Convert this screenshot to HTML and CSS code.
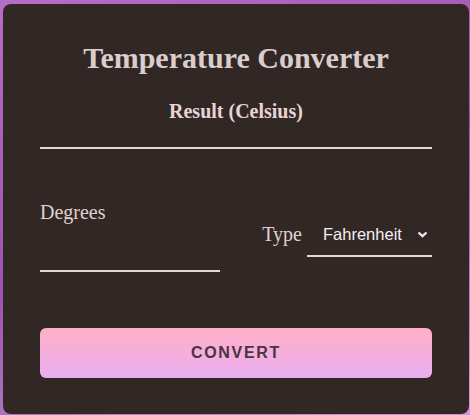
FILE: index.html
```html
<!DOCTYPE html>
<html>
<head>
<meta charset="utf-8">
<link rel="stylesheet" href="styles.css">
</head>
<body>
<div class="card">
  <h1 class="title">Temperature Converter</h1>
  <div class="result-label">Result (Celsius)</div>
  <div class="result-line"></div>
  <div class="row">
    <div class="degrees">
      <label class="label">Degrees</label>
      <div class="degrees-line"></div>
    </div>
    <div class="type">
      <span class="label">Type</span>
      <div class="select">
        <span class="select-text">Fahrenheit</span>
        <svg class="chev" width="11" height="7" viewBox="0 0 11 7"><path d="M1.5 1.5 L5.5 5.2 L9.5 1.5" fill="none" stroke="#f2e8ec" stroke-width="2.3"/></svg>
      </div>
    </div>
  </div>
  <button class="btn">CONVERT</button>
</div>
</body>
</html>
```
FILE: styles.css
```css
html, body { margin: 0; padding: 0; }
body {
  width: 470px;
  height: 415px;
  overflow: hidden;
  background: linear-gradient(160deg, #b36ec6 0%, #9a55b0 50%, #c89ad6 100%);
  font-family: "Liberation Serif", "Times New Roman", serif;
}
.card {
  margin: 4px 0 0 3px;
  width: 466px;
  height: 410px;
  box-sizing: border-box;
  background: #312826;
  border-radius: 8px;
  padding: 36px 37px 0;
  display: flex;
  flex-direction: column;
}
.title {
  margin: 0;
  font-size: 30px;
  font-weight: bold;
  color: #dccdcd;
  text-align: center;
  line-height: 36px;
}
.result-label {
  margin-top: 24px;
  font-size: 20px;
  font-weight: bold;
  color: #e8d4d6;
  text-align: center;
  line-height: 22px;
}
.result-line {
  margin-top: 25px;
  height: 2px;
  background: #e6d8d8;
}
.row {
  margin-top: 52px;
  display: flex;
  justify-content: space-between;
  align-items: center;
}
.degrees { width: 180px; display: flex; flex-direction: column; }
.label {
  font-size: 20px;
  color: #e2d0d0;
  line-height: 22px;
}
.degrees-line {
  margin-top: 47px;
  height: 2px;
  background: #e6d8d8;
}
.type {
  display: flex;
  align-items: baseline;
  gap: 5px;
}
.type .label { position: relative; top: 1px; }
.select {
  width: 125px;
  height: 40px;
  box-sizing: border-box;
  border-bottom: 2px solid #e6d8d8;
  display: flex;
  align-items: center;
  justify-content: space-between;
  padding: 0 4px 3px 16px;
}
.select-text {
  font-family: "Liberation Sans", Arial, sans-serif;
  font-size: 16.5px;
  color: #f4eef0;
}
.btn {
  margin-top: 56px;
  height: 50px;
  border: none;
  border-radius: 6px;
  background: linear-gradient(180deg, #ffaec6 0%, #e9aff1 100%);
  font-family: "Liberation Sans", Arial, sans-serif;
  font-weight: bold;
  font-size: 16px;
  letter-spacing: 1.7px;
  color: #4b3343;
}
```
